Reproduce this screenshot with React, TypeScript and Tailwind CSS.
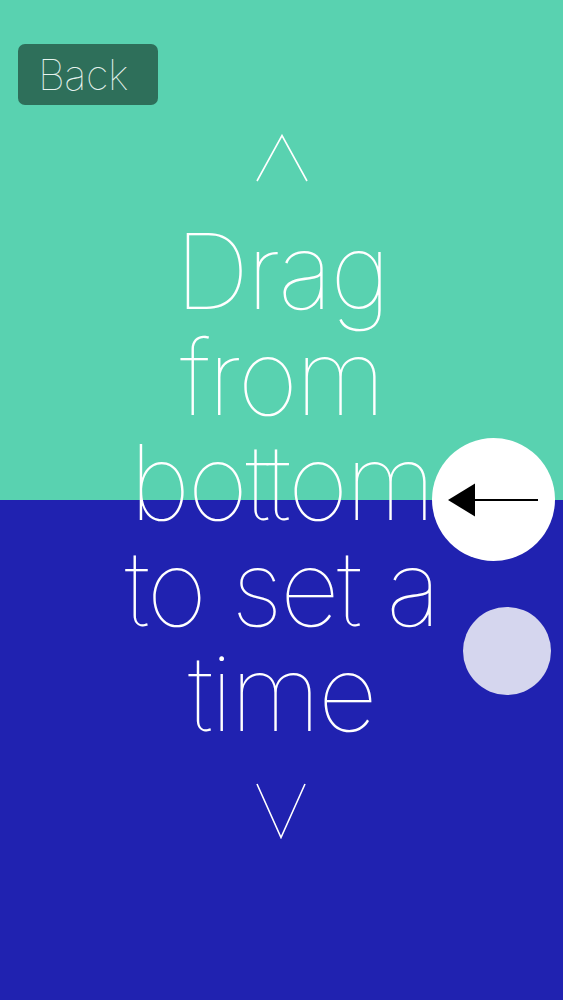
export default function App() {
  return (
    <div className="relative grid h-[1000px] w-full overflow-hidden font-['Inter','Liberation_Sans',sans-serif] text-white">
      {/* Background halves */}
      <div className="col-start-1 row-start-1 flex flex-col">
        <div className="h-[500px] bg-[#59d2b0]" />
        <div className="h-[500px] bg-[#2022b0]" />
      </div>

      {/* Content */}
      <div className="col-start-1 row-start-1 flex flex-col">
        <div className="pl-[18px] pt-[44px]">
          <button className="flex h-[61px] w-[140px] items-center rounded-[7px] bg-[#2e6f5a] pl-[20px] text-[42px] font-thin leading-none tracking-[-0.5px] text-[#e6f3ee]">
            Back
          </button>
        </div>

        <div className="mt-[29px] flex justify-center">
          <svg width="52" height="48" viewBox="0 0 52 48" className="ml-[1px]">
            <path d="M1 47 L26 1.5 L51 47" fill="none" stroke="white" strokeWidth="1.6" />
          </svg>
        </div>

        <div className="mt-[37px] flex flex-col items-center text-[104px] font-thin leading-[105.5px] tracking-[-2.5px]">
          <span>Drag</span>
          <span>from</span>
          <span>bottom</span>
          <span>to set a</span>
          <span>time</span>
        </div>

        <div className="mt-[36px] flex justify-center">
          <svg width="50" height="56" viewBox="0 0 50 56" className="ml-[-2px]">
            <path d="M1 1 L25 54.5 L49 1" fill="none" stroke="white" strokeWidth="1.6" />
          </svg>
        </div>
      </div>

      {/* Drag handle */}
      <div className="absolute left-[432px] top-[438px] flex h-[123px] w-[123px] items-center justify-center rounded-full bg-white">
        <svg width="92" height="36" viewBox="0 0 92 36">
          <path d="M0 18 L27 1.5 L27 34.5 Z" fill="black" />
          <path d="M20 18 L90 18" stroke="black" strokeWidth="2" />
        </svg>
      </div>

      <div className="absolute left-[463px] top-[607px] h-[88px] w-[88px] rounded-full bg-[#d5d6ee]" />
    </div>
  );
}
